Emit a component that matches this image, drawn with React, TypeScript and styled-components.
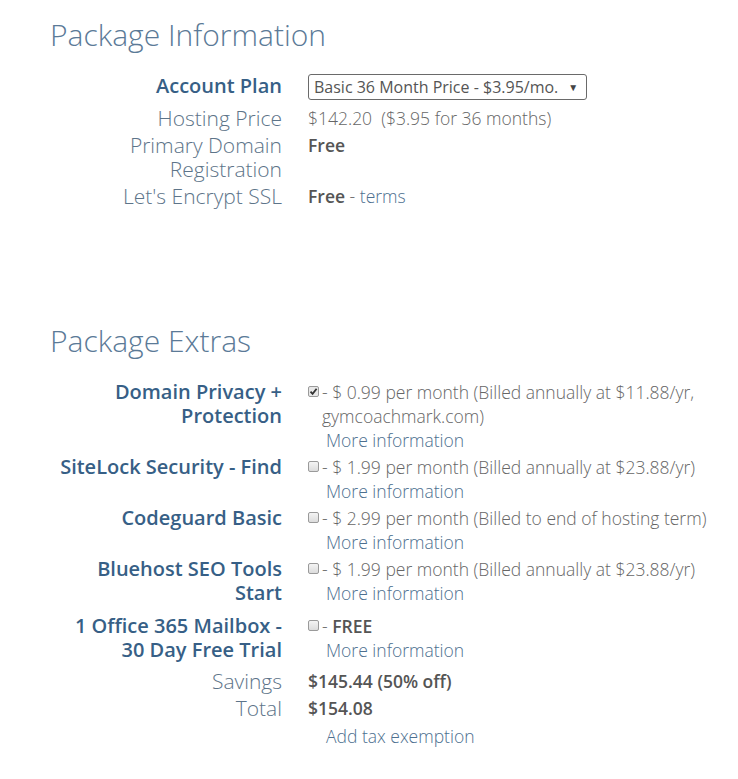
import React from 'react';
import styled, { createGlobalStyle } from 'styled-components';

const GlobalStyle = createGlobalStyle`
    body {
        margin: 0;
        background: #ffffff;
        font-family: "Open Sans", "Noto Sans", sans-serif;
    }
`

type RowType = {
    label: string;
    strong?: boolean;
    space?: number;
    children: React.ReactNode;
}

const Row = (props: RowType) => {
    return (
        <>
            <Label $strong={props.strong} $space={props.space}>{props.label}</Label>
            <Value $space={props.space}>{props.children}</Value>
        </>
    );
};

type ExtraType = {
    label: string;
    checked?: boolean;
    space?: number;
    text: React.ReactNode;
}

const Extra = (props: ExtraType) => {
    return (
        <Row label={props.label} strong space={props.space}>
            <ExtraLine>
                <Box $checked={props.checked}>
                    {props.checked && (
                        <svg width="9" height="9" viewBox="0 0 9 9">
                            <path d="M1.5 4.6 L3.6 6.8 L7.6 1.8" stroke="#333" strokeWidth="1.8" fill="none"/>
                        </svg>
                    )}
                </Box>
                <span>{props.text}</span>
            </ExtraLine>
            <More href="#">More information</More>
        </Row>
    );
};

export default function App() {
    return (
        <Page>
            <GlobalStyle/>
            <Section>
                <Heading>Package Information</Heading>
                <Grid>
                    <Row label="Account Plan" strong>
                        <Select>
                            <span>Basic 36 Month Price - $3.95/mo.</span>
                            <Arrow>▼</Arrow>
                        </Select>
                    </Row>
                    <Row label="Hosting Price">$142.20&nbsp; ($3.95 for 36 months)</Row>
                    <Row label="Primary Domain Registration"><Bold>Free</Bold></Row>
                    <Row label="Let's Encrypt SSL"><Bold>Free</Bold> - <Link href="#">terms</Link></Row>
                </Grid>
            </Section>
            <Section>
                <Heading>Package Extras</Heading>
                <Grid>
                    <Extra label="Domain Privacy + Protection" checked
                           text="- $ 0.99 per month (Billed annually at $11.88/yr, gymcoachmark.com)"/>
                    <Extra label="SiteLock Security - Find"
                           text="- $ 1.99 per month (Billed annually at $23.88/yr)"/>
                    <Extra label="Codeguard Basic"
                           text="- $ 2.99 per month (Billed to end of hosting term)"/>
                    <Extra label="Bluehost SEO Tools Start"
                           text="- $ 1.99 per month (Billed annually at $23.88/yr)"/>
                    <Extra label="1 Office 365 Mailbox - 30 Day Free Trial" space={6}
                           text={<>- <Bold>FREE</Bold></>}/>
                    <Row label="Savings" space={4}><Bold>$145.44 (50% off)</Bold></Row>
                    <Row label="Total">
                        <Bold>$154.08</Bold>
                        <More href="#" $top>Add tax exemption</More>
                    </Row>
                </Grid>
            </Section>
        </Page>
    );
}

const Page = styled.div`
    padding: 15px 0 30px 50px;
    display: flex;
    flex-direction: column;
    gap: 113px;
`

const Section = styled.section``

const Heading = styled.h2`
    margin: 0 0 19px;
    font-size: 30px;
    font-weight: 300;
    line-height: 40px;
    color: #5b7a97;
`

const Grid = styled.div`
    display: grid;
    grid-template-columns: 232px 1fr;
    column-gap: 26px;
    row-gap: 3px;
    align-items: start;
`

const Label = styled.div<{ $strong?: boolean; $space?: number }>`
    text-align: right;
    font-size: ${p => (p.$strong ? '20px' : '21px')};
    line-height: 24px;
    font-weight: ${p => (p.$strong ? 600 : 300)};
    color: ${p => (p.$strong ? '#375f86' : '#5d7489')};
    padding-top: ${p => p.$space ?? 0}px;
`

const Value = styled.div<{ $space?: number }>`
    font-size: 17.5px;
    line-height: 24px;
    font-weight: 300;
    color: #666;
    padding-top: ${p => p.$space ?? 0}px;
`

const Bold = styled.b`
    font-weight: 600;
    color: #555;
`

const Link = styled.a`
    color: #4d6f8f;
    text-decoration: none;
`

const More = styled(Link)<{ $top?: boolean }>`
    display: block;
    width: fit-content;
    margin-left: 18px;
    margin-top: ${p => (p.$top ? '4px' : '0')};
`

const Select = styled.div`
    display: inline-flex;
    align-items: center;
    gap: 10px;
    height: 26px;
    box-sizing: border-box;
    padding: 0 8px 0 5px;
    border: 1px solid #6a6a6a;
    border-radius: 3px;
    font-size: 16px;
    font-weight: 400;
    color: #555;
    margin-bottom: 3px;
    vertical-align: top;
`

const Arrow = styled.span`
    font-size: 10px;
    color: #444;
`

const ExtraLine = styled.div`
    display: flex;
    align-items: flex-start;
    gap: 3px;
`

const Box = styled.span<{ $checked?: boolean }>`
    flex: none;
    width: 11px;
    height: 11px;
    margin-top: 6px;
    box-sizing: border-box;
    border: 1px solid #9a9a9a;
    border-radius: 2px;
    background: ${p => (p.$checked ? '#e8e8e8' : 'linear-gradient(#f4f4f4, #dcdcdc)')};
    display: flex;
    align-items: center;
    justify-content: center;
`
